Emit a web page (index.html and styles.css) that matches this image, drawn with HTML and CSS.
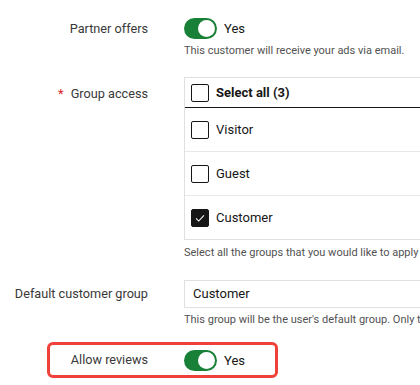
FILE: index.html
```html
<!DOCTYPE html>
<html>
<head>
<meta charset="utf-8">
<link rel="stylesheet" href="styles.css">
</head>
<body>
<div class="form">
  <div class="row row-partner">
    <div class="label">Partner offers</div>
    <div class="field">
      <div class="toggle-line"><span class="toggle"><span class="knob"></span></span><span class="toggle-text">Yes</span></div>
      <div class="help">This customer will receive your ads via email.</div>
    </div>
  </div>

  <div class="row row-groups">
    <div class="label label-top"><span class="req">*</span>Group access</div>
    <div class="field">
      <div class="list">
        <div class="item head"><span class="cb"></span><span class="item-text bold">Select all (3)</span></div>
        <div class="item"><span class="cb"></span><span class="item-text">Visitor</span></div>
        <div class="item"><span class="cb"></span><span class="item-text">Guest</span></div>
        <div class="item last"><span class="cb checked"><svg viewBox="0 0 16 16" width="14" height="14"><path d="M3.5 8.5 L6.5 11.5 L12.5 5" fill="none" stroke="#fff" stroke-width="1.2"/></svg></span><span class="item-text">Customer</span></div>
      </div>
      <div class="help help-groups">Select all the groups that you would like to apply to this customer.</div>
    </div>
  </div>

  <div class="row row-default">
    <div class="label">Default customer group</div>
    <div class="field">
      <div class="select">Customer</div>
      <div class="help">This group will be the user's default group. Only the group selected above can be chosen.</div>
    </div>
  </div>

  <div class="row row-reviews">
    <div class="highlight">
      <div class="label">Allow reviews</div>
      <div class="toggle-line"><span class="toggle"><span class="knob"></span></span><span class="toggle-text">Yes</span></div>
    </div>
  </div>
</div>
</body>
</html>
```

FILE: styles.css
```css
html, body {
  margin: 0;
  padding: 0;
  background: #ffffff;
  overflow: hidden;
}
body {
  width: 420px;
  height: 385px;
  font-family: Roboto, "Noto Sans", sans-serif;
  color: #161616;
}
.form {
  display: flex;
  flex-direction: column;
  width: 420px;
  overflow: hidden;
}
.row {
  display: grid;
  grid-template-columns: 148px minmax(0, 1fr);
  column-gap: 36px;
  align-items: start;
}
.field {
  min-width: 0;
  overflow: hidden;
}
.label {
  text-align: right;
  font-size: 12.7px;
  color: #393939;
  line-height: 20px;
}
.req {
  color: #da1e28;
  margin-right: 7px;
  font-size: 13px;
}
.row-partner {
  padding-top: 18px;
}
.row-partner .label {
  line-height: 21px;
}
.toggle-line {
  display: flex;
  align-items: center;
  height: 21px;
}
.toggle {
  width: 33px;
  height: 21px;
  border-radius: 11px;
  background: #198038;
  position: relative;
  box-sizing: border-box;
  flex: none;
}
.knob {
  position: absolute;
  right: 2px;
  top: 2px;
  width: 17px;
  height: 17px;
  border-radius: 50%;
  background: #ffffff;
}
.toggle-text {
  margin-left: 7px;
  font-size: 13px;
  color: #161616;
}
.help {
  font-size: 11px;
  color: #525252;
  line-height: 16px;
  margin-top: 4px;
  white-space: nowrap;
}
.help-groups {
  margin-top: 5px;
}
.row-groups {
  margin-top: 18px;
}
.label-top {
  padding-top: 7px;
}
.list {
  border: 1px solid #e0e0e0;
  border-right: none;
}
.item {
  display: flex;
  align-items: center;
  height: 44px;
  box-sizing: border-box;
  border-top: 1px solid #e8e8e8;
  padding-left: 6px;
}
.item.head {
  height: 30px;
  border-top: none;
  border-bottom: 1px solid #161616;
}
.item.head + .item {
  border-top: none;
  height: 43px;
}
.cb {
  width: 18px;
  height: 18px;
  box-sizing: border-box;
  border: 1px solid #161616;
  border-radius: 2px;
  flex: none;
  display: flex;
  align-items: center;
  justify-content: center;
}
.cb.checked {
  background: #161616;
}
.item-text {
  margin-left: 7px;
  font-size: 13px;
  color: #161616;
}
.bold {
  font-weight: 700;
}
.row-default {
  margin-top: 19px;
}
.row-default .label {
  line-height: 28px;
}
.select {
  height: 28px;
  box-sizing: border-box;
  border: 1px solid #e0e0e0;
  border-right: none;
  padding-left: 8px;
  font-size: 13px;
  line-height: 26px;
  color: #161616;
}
.row-reviews {
  display: block;
  margin-top: 14px;
  padding-left: 47px;
}
.highlight {
  width: 231px;
  height: 36px;
  box-sizing: border-box;
  border: 3px solid #f0403a;
  border-radius: 6px;
  display: flex;
  align-items: center;
}
.highlight .label {
  width: 98px;
  flex: none;
}
.highlight .toggle-line {
  margin-left: 36px;
}
```
